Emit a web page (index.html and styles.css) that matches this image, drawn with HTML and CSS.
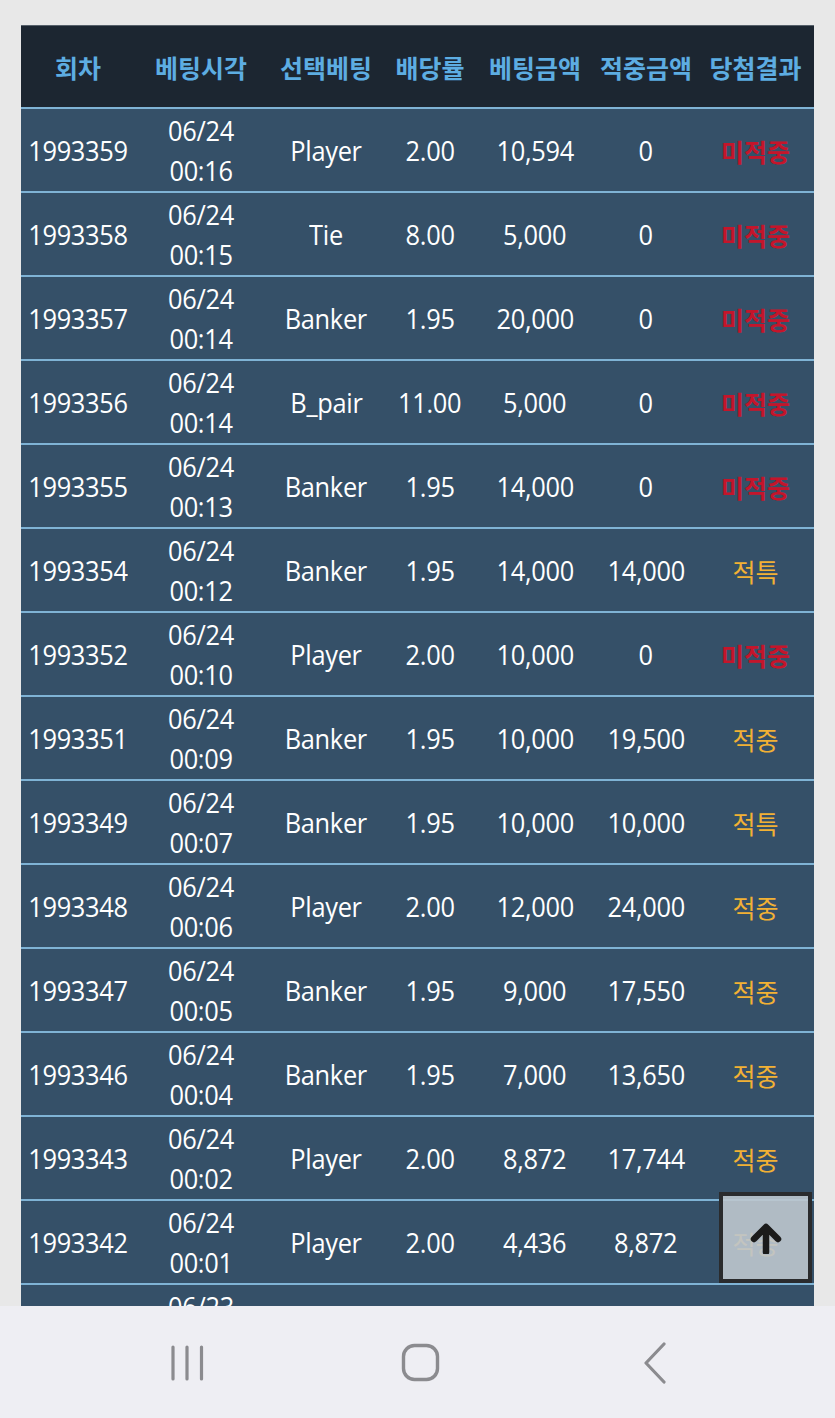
FILE: index.html
```html
<!DOCTYPE html>
<html lang="ko">
<head>
<meta charset="utf-8">
<title>베팅내역</title>
<link rel="stylesheet" href="styles.css">
</head>
<body>
<div class="screen">
  <div class="table">
    <div class="row head">
      <div class="cell">회차</div>
      <div class="cell">베팅시각</div>
      <div class="cell">선택베팅</div>
      <div class="cell">배당률</div>
      <div class="cell">베팅금액</div>
      <div class="cell">적중금액</div>
      <div class="cell">당첨결과</div>
    </div>
    <div class="row"><div class="cell"><span class="lt">1993359</span></div><div class="cell"><span class="lt">06/24<br>00:16</span></div><div class="cell"><span class="lt">Player</span></div><div class="cell"><span class="lt">2.00</span></div><div class="cell"><span class="lt">10,594</span></div><div class="cell"><span class="lt">0</span></div><div class="cell lose">미적중</div></div>
    <div class="row"><div class="cell"><span class="lt">1993358</span></div><div class="cell"><span class="lt">06/24<br>00:15</span></div><div class="cell"><span class="lt">Tie</span></div><div class="cell"><span class="lt">8.00</span></div><div class="cell"><span class="lt">5,000</span></div><div class="cell"><span class="lt">0</span></div><div class="cell lose">미적중</div></div>
    <div class="row"><div class="cell"><span class="lt">1993357</span></div><div class="cell"><span class="lt">06/24<br>00:14</span></div><div class="cell"><span class="lt">Banker</span></div><div class="cell"><span class="lt">1.95</span></div><div class="cell"><span class="lt">20,000</span></div><div class="cell"><span class="lt">0</span></div><div class="cell lose">미적중</div></div>
    <div class="row"><div class="cell"><span class="lt">1993356</span></div><div class="cell"><span class="lt">06/24<br>00:14</span></div><div class="cell"><span class="lt">B_pair</span></div><div class="cell"><span class="lt">11.00</span></div><div class="cell"><span class="lt">5,000</span></div><div class="cell"><span class="lt">0</span></div><div class="cell lose">미적중</div></div>
    <div class="row"><div class="cell"><span class="lt">1993355</span></div><div class="cell"><span class="lt">06/24<br>00:13</span></div><div class="cell"><span class="lt">Banker</span></div><div class="cell"><span class="lt">1.95</span></div><div class="cell"><span class="lt">14,000</span></div><div class="cell"><span class="lt">0</span></div><div class="cell lose">미적중</div></div>
    <div class="row"><div class="cell"><span class="lt">1993354</span></div><div class="cell"><span class="lt">06/24<br>00:12</span></div><div class="cell"><span class="lt">Banker</span></div><div class="cell"><span class="lt">1.95</span></div><div class="cell"><span class="lt">14,000</span></div><div class="cell"><span class="lt">14,000</span></div><div class="cell win">적특</div></div>
    <div class="row"><div class="cell"><span class="lt">1993352</span></div><div class="cell"><span class="lt">06/24<br>00:10</span></div><div class="cell"><span class="lt">Player</span></div><div class="cell"><span class="lt">2.00</span></div><div class="cell"><span class="lt">10,000</span></div><div class="cell"><span class="lt">0</span></div><div class="cell lose">미적중</div></div>
    <div class="row"><div class="cell"><span class="lt">1993351</span></div><div class="cell"><span class="lt">06/24<br>00:09</span></div><div class="cell"><span class="lt">Banker</span></div><div class="cell"><span class="lt">1.95</span></div><div class="cell"><span class="lt">10,000</span></div><div class="cell"><span class="lt">19,500</span></div><div class="cell win">적중</div></div>
    <div class="row"><div class="cell"><span class="lt">1993349</span></div><div class="cell"><span class="lt">06/24<br>00:07</span></div><div class="cell"><span class="lt">Banker</span></div><div class="cell"><span class="lt">1.95</span></div><div class="cell"><span class="lt">10,000</span></div><div class="cell"><span class="lt">10,000</span></div><div class="cell win">적특</div></div>
    <div class="row"><div class="cell"><span class="lt">1993348</span></div><div class="cell"><span class="lt">06/24<br>00:06</span></div><div class="cell"><span class="lt">Player</span></div><div class="cell"><span class="lt">2.00</span></div><div class="cell"><span class="lt">12,000</span></div><div class="cell"><span class="lt">24,000</span></div><div class="cell win">적중</div></div>
    <div class="row"><div class="cell"><span class="lt">1993347</span></div><div class="cell"><span class="lt">06/24<br>00:05</span></div><div class="cell"><span class="lt">Banker</span></div><div class="cell"><span class="lt">1.95</span></div><div class="cell"><span class="lt">9,000</span></div><div class="cell"><span class="lt">17,550</span></div><div class="cell win">적중</div></div>
    <div class="row"><div class="cell"><span class="lt">1993346</span></div><div class="cell"><span class="lt">06/24<br>00:04</span></div><div class="cell"><span class="lt">Banker</span></div><div class="cell"><span class="lt">1.95</span></div><div class="cell"><span class="lt">7,000</span></div><div class="cell"><span class="lt">13,650</span></div><div class="cell win">적중</div></div>
    <div class="row"><div class="cell"><span class="lt">1993343</span></div><div class="cell"><span class="lt">06/24<br>00:02</span></div><div class="cell"><span class="lt">Player</span></div><div class="cell"><span class="lt">2.00</span></div><div class="cell"><span class="lt">8,872</span></div><div class="cell"><span class="lt">17,744</span></div><div class="cell win">적중</div></div>
    <div class="row"><div class="cell"><span class="lt">1993342</span></div><div class="cell"><span class="lt">06/24<br>00:01</span></div><div class="cell"><span class="lt">Player</span></div><div class="cell"><span class="lt">2.00</span></div><div class="cell"><span class="lt">4,436</span></div><div class="cell"><span class="lt">8,872</span></div><div class="cell win">적중</div></div>
    <div class="row"><div class="cell"><span class="lt">1993341</span></div><div class="cell"><span class="lt">06/23<br>23:59</span></div><div class="cell"><span class="lt">Banker</span></div><div class="cell"><span class="lt">1.95</span></div><div class="cell"><span class="lt">5,000</span></div><div class="cell"><span class="lt">9,750</span></div><div class="cell win">적중</div></div>
  </div>
</div>
<button class="to-top" type="button" aria-label="맨 위로">
  <svg width="34" height="32" viewBox="0 0 34 32"><path d="M17 30V6M5 17L17 5l12 12" fill="none" stroke="#1b1b1b" stroke-width="6.5" stroke-linecap="round" stroke-linejoin="round"/></svg>
</button>
<nav class="navbar">
  <div class="nav-item">
    <svg width="36" height="38" viewBox="0 0 36 38"><g stroke="#8b8b8f" stroke-width="3.2" stroke-linecap="round"><path d="M4 3v32M18 3v32M32.5 3v32"/></g></svg>
  </div>
  <div class="nav-item">
    <svg width="40" height="40" viewBox="0 0 40 40"><rect x="2.5" y="2.5" width="34" height="34" rx="11" fill="none" stroke="#8b8b8f" stroke-width="3.4"/></svg>
  </div>
  <div class="nav-item">
    <svg width="24" height="42" viewBox="0 0 24 42"><path d="M21 2L3 21l18 19" fill="none" stroke="#8b8b8f" stroke-width="3.2" stroke-linecap="round" stroke-linejoin="round"/></svg>
  </div>
</nav>
</body>
</html>
```

FILE: styles.css
```css
html, body {
  margin: 0;
  padding: 0;
  background: #eeeef3;
}

body {
  position: relative;
  width: 835px;
  font-family: "Open Sans", "Noto Sans CJK KR", sans-serif;
}

.screen {
  height: 1306px;
  overflow: hidden;
  background: #e8e8e8;
  padding: 25px 21px 0;
  box-sizing: border-box;
}

.table {
  width: 793px;
}

.row {
  display: grid;
  grid-template-columns: 114px 132px 118px 90px 120px 102px 117px;
  height: 84px;
  box-sizing: border-box;
  border-bottom: 2px solid #7fb3d5;
  background: #355068;
}

.row.head {
  background: #1c2631;
  border-top: 1px solid #56606a;
}

.cell {
  display: flex;
  align-items: center;
  justify-content: center;
  text-align: center;
  color: #ffffff;
  font-family: "Noto Sans CJK KR", sans-serif;
  font-size: 25px;
  white-space: nowrap;
  padding-top: 1px;
}

.head .cell {
  color: #5dade2;
  font-weight: 700;
  font-size: 25px;
  padding-top: 0;
}

.lt {
  display: inline-block;
  font-family: "Open Sans", "Noto Sans CJK KR", sans-serif;
  font-size: 27px;
  line-height: 40px;
  transform: scaleX(0.94);
  letter-spacing: -0.3px;
}

.lose {
  color: #c4152b;
  font-weight: 700;
}

.win {
  color: #f2b134;
}

.to-top {
  position: absolute;
  left: 719px;
  top: 1192px;
  width: 93px;
  height: 91px;
  box-sizing: border-box;
  border: 4px solid #2a2b2d;
  background: rgba(190, 199, 206, 0.9);
  display: flex;
  align-items: center;
  justify-content: center;
  padding: 0;
  margin: 0;
}

.navbar {
  height: 112px;
  background: #eeeef3;
  display: flex;
  align-items: center;
  padding-left: 70px;
}

.nav-item {
  width: 234px;
  display: flex;
  justify-content: center;
  align-items: center;
  padding-top: 2px;
}
```
